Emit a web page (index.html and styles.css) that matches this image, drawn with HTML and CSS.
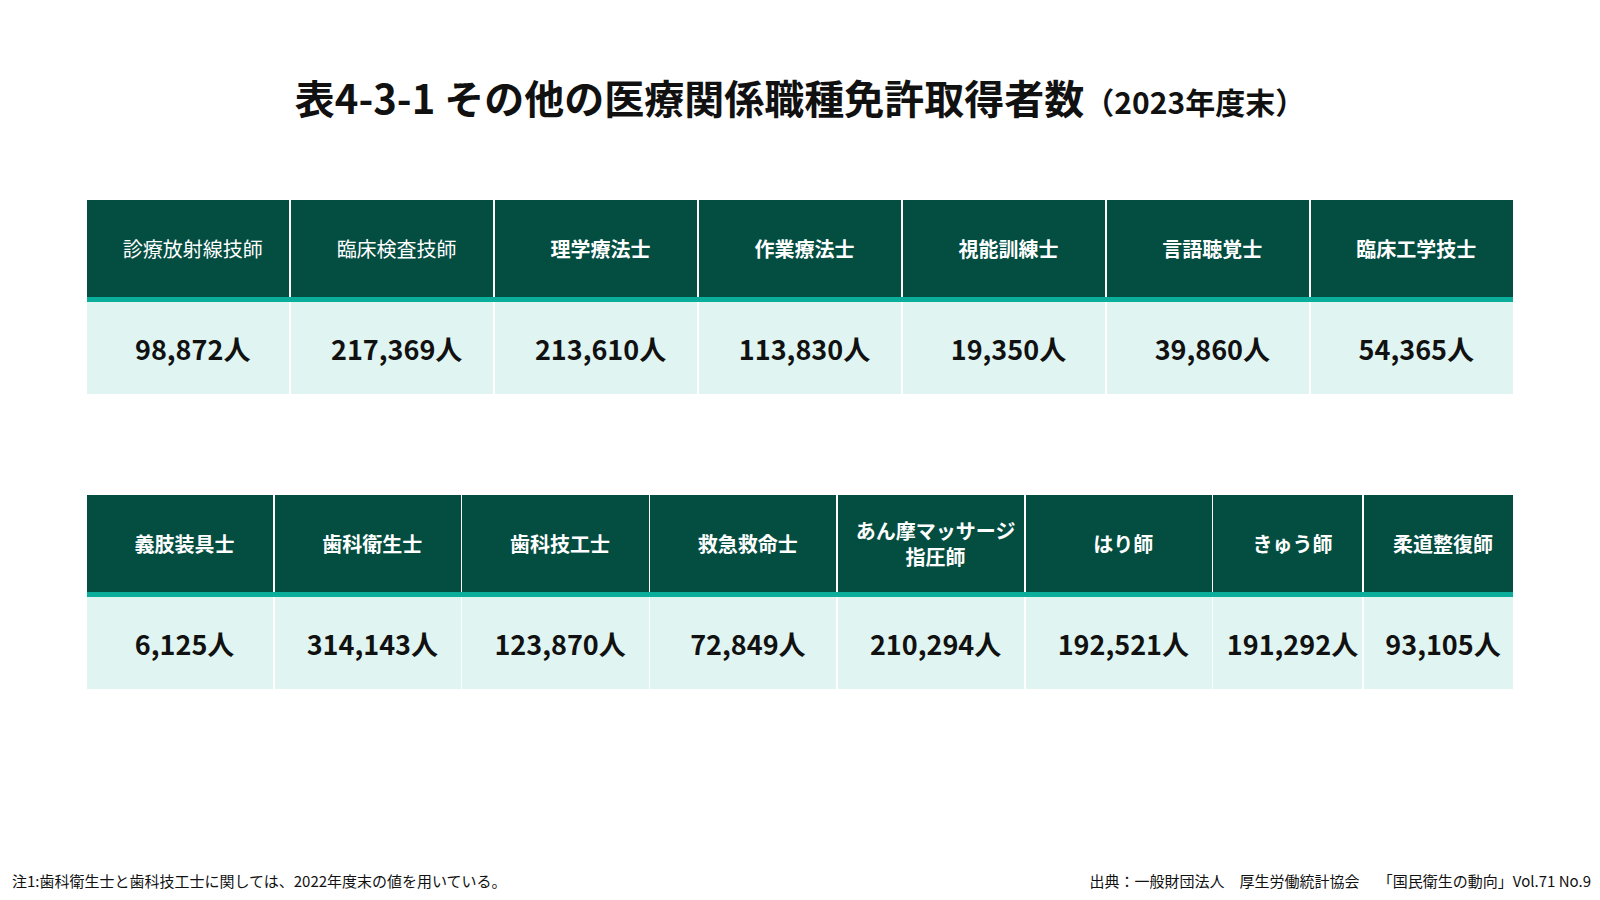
FILE: index.html
```html
<!DOCTYPE html>
<html lang="ja">
<head>
<meta charset="utf-8">
<title>表4-3-1 その他の医療関係職種免許取得者数</title>
<link rel="stylesheet" href="styles.css">
</head>
<body>
<div class="page">
  <h1 class="title">表4-3-1 その他の医療関係職種免許取得者数<span class="title-sub">（2023年度末）</span></h1>

  <div class="tbl tbl-7">
    <div class="tbl-row tbl-head">
      <div class="th th-light">診療放射線技師</div>
      <div class="th th-light">臨床検査技師</div>
      <div class="th">理学療法士</div>
      <div class="th">作業療法士</div>
      <div class="th">視能訓練士</div>
      <div class="th">言語聴覚士</div>
      <div class="th">臨床工学技士</div>
    </div>
    <div class="tbl-rule"></div>
    <div class="tbl-row tbl-body">
      <div class="td">98,872人</div>
      <div class="td">217,369人</div>
      <div class="td">213,610人</div>
      <div class="td">113,830人</div>
      <div class="td">19,350人</div>
      <div class="td">39,860人</div>
      <div class="td">54,365人</div>
    </div>
  </div>

  <div class="tbl tbl-8">
    <div class="tbl-row tbl-head">
      <div class="th">義肢装具士</div>
      <div class="th">歯科衛生士</div>
      <div class="th">歯科技工士</div>
      <div class="th">救急救命士</div>
      <div class="th">あん摩マッサージ<br>指圧師</div>
      <div class="th">はり師</div>
      <div class="th">きゅう師</div>
      <div class="th">柔道整復師</div>
    </div>
    <div class="tbl-rule"></div>
    <div class="tbl-row tbl-body">
      <div class="td">6,125人</div>
      <div class="td">314,143人</div>
      <div class="td">123,870人</div>
      <div class="td">72,849人</div>
      <div class="td">210,294人</div>
      <div class="td">192,521人</div>
      <div class="td">191,292人</div>
      <div class="td">93,105人</div>
    </div>
  </div>

  <footer class="footer">
    <p class="note">注1:歯科衛生士と歯科技工士に関しては、2022年度末の値を用いている。</p>
    <p class="source">出典：一般財団法人　厚生労働統計協会　 「国民衛生の動向」Vol.71 No.9</p>
  </footer>
</div>
</body>
</html>
```

FILE: styles.css
```css
* { box-sizing: border-box; }

html, body {
  margin: 0;
  padding: 0;
  background: #ffffff;
}

body {
  font-family: "Noto Sans CJK JP", "Noto Sans", sans-serif;
  color: #111111;
}

.page {
  width: 1600px;
  height: 900px;
  display: flex;
  flex-direction: column;
  padding-top: 73px;
}

.title {
  height: 48px;
  margin: 0 0 79px;
  font-size: 40px;
  line-height: 48px;
  font-weight: 700;
  text-align: center;
  color: #111111;
}

.title-sub {
  font-size: 30px;
  line-height: 1;
}

.tbl {
  margin: 0 87px;
}

.tbl + .tbl {
  margin-top: 101px;
}

.tbl-row {
  display: grid;
  column-gap: 1.5px;
  background: #ffffff;
}

.tbl-7 .tbl-row {
  grid-template-columns: repeat(7, 1fr);
}

.tbl-8 .tbl-row {
  grid-template-columns: repeat(6, 1fr) repeat(2, 0.8fr);
}

.tbl-head {
  height: 97px;
}

.th {
  background: #034d41;
  color: #ffffff;
  font-size: 20px;
  font-weight: 700;
  line-height: 1.3;
  display: flex;
  align-items: center;
  justify-content: center;
  text-align: center;
  padding-left: 9px;
}

.th-light {
  font-weight: 400;
}

.tbl-rule {
  height: 5px;
  background: #0aae9a;
}

.tbl-body {
  height: 92px;
}

.td {
  background: #e0f5f2;
  font-size: 27px;
  font-weight: 700;
  display: flex;
  align-items: center;
  justify-content: center;
  color: #111111;
  white-space: nowrap;
  padding-left: 9px;
}

.footer {
  margin-top: auto;
  height: 36px;
  display: flex;
  justify-content: space-between;
  align-items: center;
  padding: 0 9px 2px 12px;
}

.note, .source {
  margin: 0;
  font-size: 15px;
  line-height: 22px;
  font-weight: 400;
  color: #111111;
  white-space: pre;
}
```
